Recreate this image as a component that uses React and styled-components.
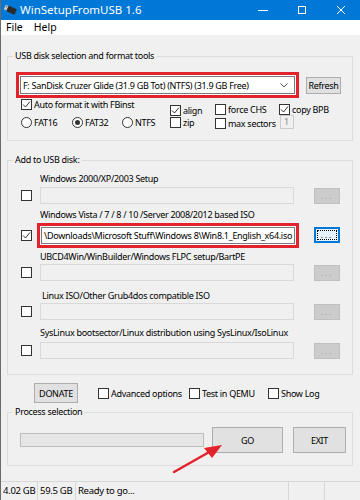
import React from 'react';
import styled, { createGlobalStyle } from 'styled-components';

const Global = createGlobalStyle`
  html, body { margin: 0; padding: 0; background: #f0f0f0; }
  body { font-family: "Noto Sans", "Liberation Sans", sans-serif; font-size: 9px; letter-spacing: -0.3px; color: #000; }
  #root { width: 360px; height: 500px; }
  * { box-sizing: border-box; }
`;

const Window = styled.div`
  position: relative;
  width: 360px;
  height: 500px;
  overflow: hidden;
  display: flex;
  flex-direction: column;
  background: #f0f0f0;
  border-left: 1px solid #6b6b6b;
`;

const TitleBar = styled.div`
  height: 20px;
  flex: none;
  display: flex;
  align-items: center;
  background: #0078d7;
  color: #fff;
`;

const AppIcon = styled.svg`
  margin-left: 2px;
  width: 14px;
  height: 12px;
  flex: none;
`;

const Title = styled.div`
  margin-left: 3px;
  font-size: 11.5px;
  letter-spacing: 0;
  line-height: 20px;
  flex: 1;
`;

const Ctrl = styled.div`
  width: 39px;
  height: 20px;
  display: flex;
  align-items: center;
  justify-content: center;
`;

const MenuBar = styled.div`
  height: 15px;
  flex: none;
  display: flex;
  align-items: center;
  background: #fff;
  padding-left: 5px;
  gap: 11px;
`;

const MenuItem = styled.span`
  font-size: 10.5px;
  letter-spacing: 0;
  line-height: 15px;
`;

const Main = styled.main`
  flex: 1;
  display: flex;
  flex-direction: column;
  padding: 0 7px 0 6px;
`;

const Group = styled.fieldset`
  margin: ${p => p.$top}px 0 0;
  padding: ${p => p.$pt}px 8px 0 8px;
  border: 1px solid #dcdcdc;
  height: ${p => p.$h}px;
  min-width: 0;
  display: flex;
  flex-direction: column;
`;

const Legend = styled.legend`
  padding: 0 2px;
  margin-left: -3px;
  line-height: 14px;
  font-size: 9px;
`;

const TopRow = styled.div`
  display: flex;
  align-items: center;
  gap: 7px;
`;

const Highlight = styled.div`
  border: 3px solid #e3232b;
  padding: 1px;
  background: #fff;
  width: ${p => p.$w}px;
  flex: none;
  margin-left: ${p => p.$ml || 0}px;
`;

const Combo = styled.div`
  height: 18px;
  border: 1px solid #7a7a7a;
  background: #fff;
  display: flex;
  align-items: center;
  padding: 0 6px 0 2px;
  justify-content: space-between;
  white-space: nowrap;
  overflow: hidden;
`;

const Button = styled.div`
  width: ${p => p.$w}px;
  height: ${p => p.$h}px;
  flex: none;
  background: #e1e1e1;
  border: 1px solid #adadad;
  display: flex;
  align-items: center;
  justify-content: center;
  font-size: ${p => p.$fs || 9}px;
  margin-left: ${p => p.$ml || 0}px;
`;

const Options = styled.div`
  display: flex;
  align-items: flex-start;
`;

const Col = styled.div`
  width: ${p => p.$w}px;
  flex: none;
  display: flex;
  flex-direction: column;
  padding-left: ${p => p.$pl || 0}px;
`;

const Option = styled.label`
  display: flex;
  align-items: center;
  gap: 2px;
  height: 11px;
  line-height: 11px;
  white-space: nowrap;
  margin-top: ${p => p.$mt || 0}px;
  margin-left: ${p => p.$ml || 0}px;
  width: ${p => (p.$w ? p.$w + 'px' : 'auto')};
  flex: none;
`;

const Box = styled.span`
  width: 11px;
  height: 11px;
  flex: none;
  border: 1px solid #333;
  background: #fff;
  display: flex;
  align-items: center;
  justify-content: center;
`;

const Radio = styled.span`
  width: 11px;
  height: 11px;
  flex: none;
  border: 1px solid #333;
  border-radius: 50%;
  background: #fff;
  display: flex;
  align-items: center;
  justify-content: center;
  &::after {
    content: '';
    width: 5px;
    height: 5px;
    border-radius: 50%;
    background: ${p => (p.$on ? '#333' : 'transparent')};
  }
`;

const RadioRow = styled.div`
  display: flex;
  margin-top: 7px;
`;

const SmallField = styled.div`
  width: 14px;
  height: 14px;
  margin-left: 1px;
  border: 1px solid #cccccc;
  background: #f0f0f0;
  color: #8a8a8a;
  padding-left: 3px;
  line-height: 12px;
`;

const IsoLabel = styled.div`
  margin-top: ${p => p.$mt}px;
  margin-left: ${p => p.$ml}px;
  line-height: 14px;
  white-space: nowrap;
`;

const IsoLine = styled.div`
  display: flex;
  align-items: center;
  height: ${p => p.$h}px;
  margin-top: ${p => p.$mt || 0}px;
  padding-left: 5px;
`;

const Field = styled.div`
  height: 17px;
  flex: none;
  width: ${p => p.$w}px;
  margin-left: ${p => p.$ml || 0}px;
  border: 1px solid ${p => (p.$active ? '#7a7a7a' : '#d9d9d9')};
  background: ${p => (p.$active ? '#fff' : '#f0f0f0')};
  padding-left: 2px;
  line-height: 15px;
  white-space: nowrap;
  overflow: hidden;
`;

const Dots = styled.div`
  width: 26px;
  height: 16px;
  flex: none;
  margin-left: ${p => p.$ml}px;
  background: ${p => (p.$focus ? '#e5f1fb' : '#cccccc')};
  border: ${p => (p.$focus ? '2px solid #0078d7' : '1px solid #bfbfbf')};
  color: ${p => (p.$focus ? '#000' : '#a0a0a0')};
  display: flex;
  align-items: center;
  justify-content: center;
  letter-spacing: 2px;
  font-size: 8px;
  line-height: 8px;
  padding: 1px;
`;

const FocusRect = styled.div`
  width: 100%;
  height: 100%;
  border: 1px dotted #000;
  display: flex;
  align-items: flex-end;
  justify-content: center;
`;

const ActionRow = styled.div`
  display: flex;
  align-items: center;
  margin-top: 8px;
  height: 20px;
`;

const ProcessRow = styled.div`
  display: flex;
  align-items: center;
  padding-left: 4px;
`;

const Progress = styled.div`
  width: 184px;
  height: 14px;
  border: 1px solid #bcbcbc;
  background: #e6e6e6;
  flex: none;
`;

const StatusBar = styled.div`
  height: 19px;
  flex: none;
  display: flex;
  border-top: 1px solid #d7d7d7;
  background: #f0f0f0;
`;

const StatusCell = styled.div`
  width: ${p => (p.$w ? p.$w + 'px' : 'auto')};
  flex: ${p => (p.$w ? 'none' : 1)};
  border-right: ${p => (p.$last ? 'none' : '1px solid #d7d7d7')};
  padding-left: 2px;
  line-height: 18px;
  font-size: 9.5px;
  white-space: nowrap;
`;

const Arrow = styled.svg`
  position: absolute;
  left: 0;
  top: 0;
  width: 360px;
  height: 500px;
  pointer-events: none;
`;

const Check = () => (
  <svg width="9" height="9" viewBox="0 0 9 9">
    <path d="M1 4.5 L3.5 7 L8 1.5" fill="none" stroke="#333" strokeWidth="1" />
  </svg>
);

const CheckBox = ({ on }) => <Box>{on ? <Check /> : null}</Box>;

const isoRows = [
  { label: 'Windows 2000/XP/2003 Setup', mt: 5, ml: 24, lineMt: 1 },
  { label: 'Windows Vista / 7 / 8 / 10 /Server 2008/2012 based ISO', mt: 4, ml: 24, lineMt: 0, active: true },
  { label: 'UBCD4Win/WinBuilder/Windows FLPC setup/BartPE', mt: 2, ml: 24, lineMt: 0 },
  { label: 'Linux ISO/Other Grub4dos compatible ISO', mt: 8, ml: 26, lineMt: 0 },
  { label: 'SysLinux bootsector/Linux distribution using SysLinux/IsoLinux', mt: 6, ml: 24, lineMt: 2 },
];

export default function App() {
  return (
    <>
      <Global />
      <Window>
        <TitleBar>
          <AppIcon viewBox="0 0 14 12">
            <g transform="rotate(25 7 6)">
              <rect x="1" y="3" width="4" height="5" fill="#c9c9c9" />
              <rect x="4" y="2.5" width="9" height="6" rx="1" fill="#2b2b2b" />
              <rect x="2" y="4" width="1" height="1" fill="#555" />
            </g>
          </AppIcon>
          <Title>WinSetupFromUSB 1.6</Title>
          <Ctrl>
            <svg width="10" height="10" viewBox="0 0 10 10"><path d="M0 5.5 H10" stroke="#fff" strokeWidth="1" /></svg>
          </Ctrl>
          <Ctrl>
            <svg width="10" height="10" viewBox="0 0 10 10"><rect x="1.5" y="1.5" width="7" height="7" fill="none" stroke="#fff" strokeWidth="1" /></svg>
          </Ctrl>
          <Ctrl>
            <svg width="10" height="10" viewBox="0 0 10 10"><path d="M1 1 L9 9 M9 1 L1 9" stroke="#fff" strokeWidth="1" /></svg>
          </Ctrl>
        </TitleBar>
        <MenuBar>
          <MenuItem>File</MenuItem>
          <MenuItem>Help</MenuItem>
        </MenuBar>
        <Main>
          <Group $top={14} $h={92} $pt={9}>
            <Legend>USB disk selection and format tools</Legend>
            <TopRow>
              <Highlight $w={283}>
                <Combo>
                  <span>F: SanDisk Cruzer Glide (31.9 GB Tot) (NTFS) (31.9 GB Free)</span>
                  <svg width="8" height="5" viewBox="0 0 8 5"><path d="M0.5 0.5 L4 4 L7.5 0.5" fill="none" stroke="#555" strokeWidth="1" /></svg>
                </Combo>
              </Highlight>
              <Button $w={35} $h={17}>Refresh</Button>
            </TopRow>
            <Options>
              <Col $w={154} $pl={5}>
                <Option $mt={1}><CheckBox on />Auto format it with FBinst</Option>
                <RadioRow>
                  <Option $w={51}><Radio />FAT16</Option>
                  <Option $w={50}><Radio $on />FAT32</Option>
                  <Option><Radio />NTFS</Option>
                </RadioRow>
              </Col>
              <Col $w={45}>
                <Option $mt={7}><CheckBox on />align</Option>
                <Option $mt={1}><CheckBox />zip</Option>
              </Col>
              <Col $w={64}>
                <Option $mt={6}><CheckBox />force CHS</Option>
                <Option $mt={3}><CheckBox />max sectors</Option>
              </Col>
              <Col $w={70}>
                <Option $mt={6}><CheckBox on />copy BPB</Option>
                <SmallField>1</SmallField>
              </Col>
            </Options>
          </Group>

          <Group $top={12} $h={222} $pt={0}>
            <Legend>Add to USB disk:</Legend>
            {isoRows.map((r, i) => (
              <div key={i}>
                <IsoLabel $mt={r.mt} $ml={r.ml}>{r.label}</IsoLabel>
                {r.active ? (
                  <IsoLine $h={26} $mt={r.lineMt}>
                    <CheckBox on />
                    <Highlight $w={262} $ml={5}>
                      <Field $w={254} $active>\Downloads\Microsoft Stuff\Windows 8\Win8.1_English_x64.iso</Field>
                    </Highlight>
                    <Dots $ml={15} $focus><FocusRect>...</FocusRect></Dots>
                  </IsoLine>
                ) : (
                  <IsoLine $h={17} $mt={r.lineMt}>
                    <CheckBox />
                    <Field $w={254} $ml={8} />
                    <Dots $ml={20}>...</Dots>
                  </IsoLine>
                )}
              </div>
            ))}
          </Group>

          <ActionRow>
            <Button $w={44} $h={20} $ml={27}>DONATE</Button>
            <Option $w={91} $ml={20}><CheckBox />Advanced options</Option>
            <Option $w={79}><CheckBox />Test in QEMU</Option>
            <Option><CheckBox />Show Log</Option>
          </ActionRow>

          <Group $top={2} $h={61} $pt={8}>
            <Legend>Process selection</Legend>
            <ProcessRow>
              <Progress />
              <Button $w={71} $h={26} $ml={8}>GO</Button>
              <Button $w={53} $h={26} $ml={10}>EXIT</Button>
            </ProcessRow>
          </Group>
        </Main>
        <StatusBar>
          <StatusCell $w={37}>4.02 GB</StatusCell>
          <StatusCell $w={38}>59.5 GB</StatusCell>
          <StatusCell $w={213}>Ready to go...</StatusCell>
          <StatusCell $w={36} />
          <StatusCell $last />
        </StatusBar>
        <Arrow viewBox="0 0 360 500">
          <line x1="173" y1="472" x2="210" y2="451" stroke="#e3232b" strokeWidth="2.5" strokeLinecap="round" />
          <polygon points="221,445 203,448 211,458" fill="#e3232b" />
        </Arrow>
      </Window>
    </>
  );
}
